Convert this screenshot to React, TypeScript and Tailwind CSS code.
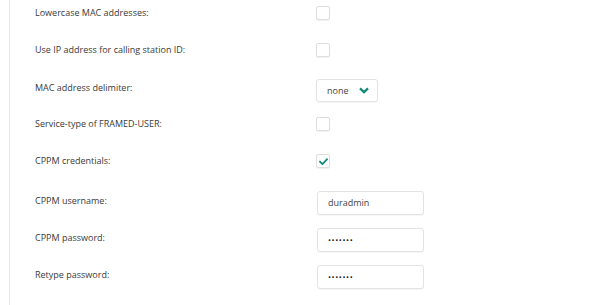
import React from 'react';

const Check = () => (
  <svg viewBox="0 0 10 8" className="w-[9px] h-[7px]">
    <path d="M1 4.2 L3.8 7 L9 1.5" fill="none" stroke="#0f8a7c" strokeWidth="2" strokeLinecap="square" />
  </svg>
);

const Chevron = () => (
  <svg viewBox="0 0 10 7" className="w-[10px] h-[7px]">
    <path d="M1 1.4 L5 5.2 L9 1.4" fill="none" stroke="#0f8a7c" strokeWidth="2.3" />
  </svg>
);

const Checkbox = ({ checked = false }: { checked?: boolean }) => (
  <div className="w-[14px] h-[14px] rounded-[2px] border border-[#dedede] bg-white shadow-[0_1px_1px_rgba(0,0,0,0.06)] flex items-center justify-center">
    {checked && <Check />}
  </div>
);

const Row = ({ label, mt, children, shift = false }: { label: string; mt: string; children: React.ReactNode; shift?: boolean }) => (
  <div className={`flex items-center ${mt}`}>
    <div className={`w-[306px] pl-[25px] text-[9px] text-[#3a3a3a] ${shift ? 'pb-[5px]' : ''}`}>{label}</div>
    {children}
  </div>
);

const TextBox = ({ value, password = false }: { value: string; password?: boolean }) => (
  <div className="w-[107px] h-[24px] ml-[1px] rounded-[3px] border border-[#e3e3e3] bg-white shadow-[0_1px_1px_rgba(0,0,0,0.04)] flex items-center pl-[10px]">
    {password ? (
      <span className="text-[8px] tracking-[0.6px] text-[#222] leading-none">•••••••</span>
    ) : (
      <span className="text-[9px] text-[#444]">{value}</span>
    )}
  </div>
);

export default function App() {
  return (
    <div className="w-[609px] h-[305px] bg-white flex" style={{ fontFamily: '"Open Sans", sans-serif' }}>
      <div className="ml-[9px] w-px h-full bg-[#e8e8e8]" />
      <div className="flex flex-col pt-[6px]">
        <Row label="Lowercase MAC addresses:" mt="">
          <Checkbox />
        </Row>
        <Row label="Use IP address for calling station ID:" mt="mt-[23px]">
          <Checkbox />
        </Row>
        <Row label="MAC address delimiter:" mt="mt-[22px]" shift>
          <div className="w-[62px] h-[23px] rounded-[3px] border border-[#e3e3e3] bg-white shadow-[0_1px_1px_rgba(0,0,0,0.04)] flex items-center justify-between pl-[10px] pr-[8px]">
            <span className="text-[9px] text-[#444]">none</span>
            <Chevron />
          </div>
        </Row>
        <Row label="Service-type of FRAMED-USER:" mt="mt-[15px]">
          <Checkbox />
        </Row>
        <Row label="CPPM credentials:" mt="mt-[23px]">
          <Checkbox checked />
        </Row>
        <Row label="CPPM username:" mt="mt-[23px]" shift>
          <TextBox value="duradmin" />
        </Row>
        <Row label="CPPM password:" mt="mt-[13px]" shift>
          <TextBox value="" password />
        </Row>
        <Row label="Retype password:" mt="mt-[13px]" shift>
          <TextBox value="" password />
        </Row>
      </div>
    </div>
  );
}
